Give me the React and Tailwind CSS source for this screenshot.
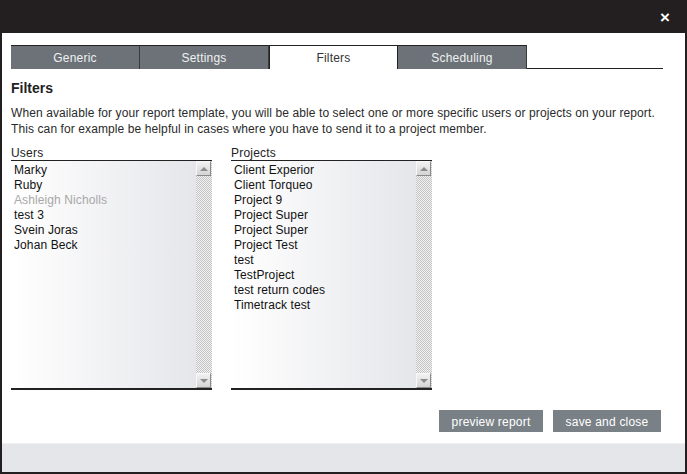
import React from 'react';

const users = [
  { name: 'Marky' },
  { name: 'Ruby' },
  { name: 'Ashleigh Nicholls', disabled: true },
  { name: 'test 3' },
  { name: 'Svein Joras' },
  { name: 'Johan Beck' },
];

const projects = [
  'Client Experior',
  'Client Torqueo',
  'Project 9',
  'Project Super',
  'Project Super',
  'Project Test',
  'test',
  'TestProject',
  'test return codes',
  'Timetrack test',
];

const tabs = ['Generic', 'Settings', 'Filters', 'Scheduling'];

const ScrollButton = ({ up }) => (
  <div className="w-[15px] h-[15px] bg-gradient-to-b from-[#f2f2f2] to-[#d4d4d4] border-t border-l border-[#f8f8f8] border-r border-b border-r-[#8a8a8a] border-b-[#8a8a8a] flex items-center justify-center">
    <div
      className={
        up
          ? 'w-0 h-0 border-l-[4px] border-r-[4px] border-b-[4px] border-l-transparent border-r-transparent border-b-[#8c8c8c]'
          : 'w-0 h-0 border-l-[4px] border-r-[4px] border-t-[4px] border-l-transparent border-r-transparent border-t-[#8c8c8c]'
      }
    />
  </div>
);

const ListBox = ({ label, children }) => (
  <div className="w-[201px]">
    <div className="text-[12px] leading-[14px] text-[#222] h-[14px] tracking-[0.2px]">{label}</div>
    <div className="h-[230px] border-t border-[#222] border-b-2 border-b-[#222] flex bg-gradient-to-r from-white to-[#e3e4e8]">
      <div className="flex-1 pt-[2px] pl-[3px] text-[12px] leading-[15px] text-[#111] tracking-[0.1px]">{children}</div>
      <div className="w-[16px] flex flex-col bg-[repeating-conic-gradient(#c4c4c4_0_25%,#f2f2f2_0_50%)] bg-[length:2px_2px]">
        <ScrollButton up />
        <div className="flex-1" />
        <ScrollButton />
      </div>
    </div>
  </div>
);

export default function App() {
  return (
    <div className="w-[687px] h-[474px] bg-[#231f20] flex flex-col font-['Liberation_Sans',Arial,sans-serif]">
      <div className="h-[33px] flex items-center justify-end pr-[17px] shrink-0">
        <span className="text-white font-bold text-[17px] leading-none mt-[1px]">×</span>
      </div>
      <div className="flex-1 mx-[2px] bg-white pl-[9px] flex flex-col">
        <div className="mt-[12px] flex w-[652px]">
          {tabs.map((t) =>
            t === 'Filters' ? (
              <div
                key={t}
                className="w-[129px] h-[24px] border-t border-x border-[#222] bg-white text-[#333] text-[12px] tracking-[0.2px] flex items-center justify-center"
              >
                {t}
              </div>
            ) : (
              <div
                key={t}
                className="w-[129px] h-[24px] border-t border-[#222] border-r border-r-[#3a3a3a] bg-[#6c7277] text-[#eef0f2] text-[12px] tracking-[0.2px] flex items-center justify-center"
              >
                {t}
              </div>
            )
          )}
          <div className="flex-1 border-b border-[#222]" />
        </div>

        <h2 className="mt-[11px] text-[14px] leading-[16px] font-bold text-[#222]">Filters</h2>
        <p className="mt-[9px] text-[12px] leading-[16px] text-[#2a2a2a] tracking-[0.1px]">
          When available for your report template, you will be able to select one or more specific users or projects on your report.
          <br />
          This can for example be helpful in cases where you have to send it to a project member.
        </p>

        <div className="mt-[9px] flex gap-[19px]">
          <ListBox label="Users">
            {users.map((u) => (
              <div key={u.name} className={u.disabled ? 'text-[#a8a8a8]' : ''}>
                {u.name}
              </div>
            ))}
          </ListBox>
          <ListBox label="Projects">
            {projects.map((p, i) => (
              <div key={i}>{p}</div>
            ))}
          </ListBox>
        </div>

        <div className="mt-[20px] flex justify-end gap-[10px] pr-[24px]">
          <button className="w-[104px] h-[22px] bg-[#7a8186] text-white text-[12px] tracking-[0.2px] pt-[1px]">preview report</button>
          <button className="w-[108px] h-[22px] bg-[#7a8186] text-white text-[12px] tracking-[0.2px] pt-[1px]">save and close</button>
        </div>
      </div>
      <div className="h-[29px] mx-[2px] bg-[#e5e6e9] border-t border-[#eff0f2] shrink-0" />
      <div className="h-[2px] shrink-0" />
    </div>
  );
}
